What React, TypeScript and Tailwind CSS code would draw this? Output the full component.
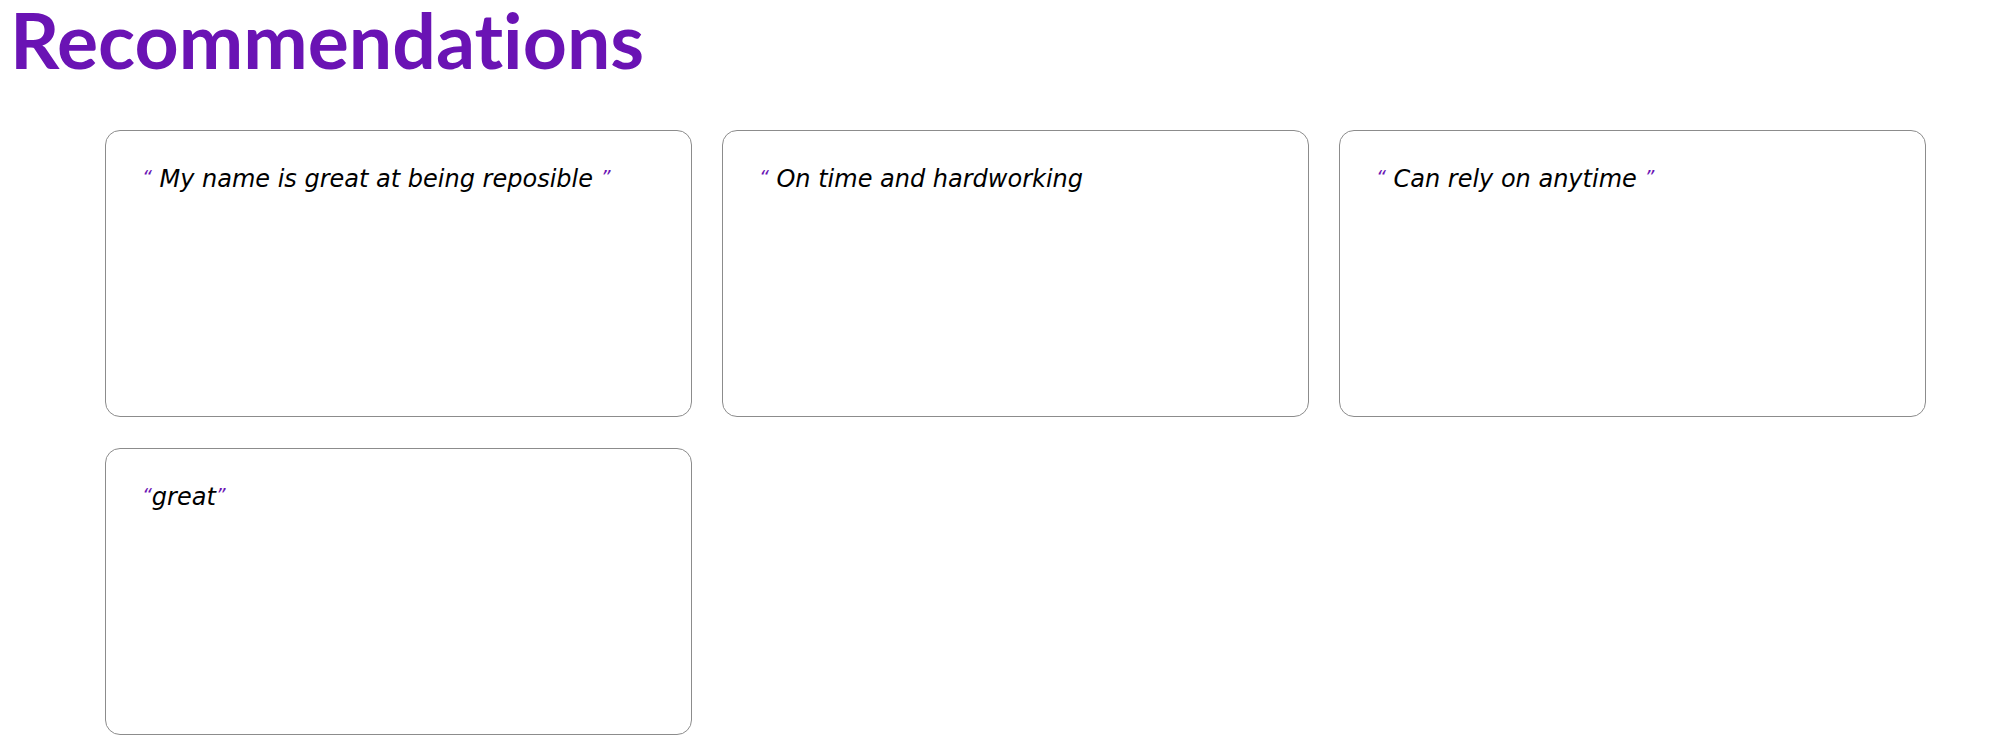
const recommendations = [
  { text: "My name is great at being reposible", spaced: true, closing: true },
  { text: "On time and hardworking", spaced: true, closing: false },
  { text: "Can rely on anytime", spaced: true, closing: true },
  { text: "great", spaced: false, closing: true },
];

function Quote({ children }: { children: string }) {
  return <span className="align-top text-[19px] leading-[26px] text-[#6a13b4]">{children}</span>;
}

function RecommendationCard({ text, spaced, closing }: { text: string; spaced: boolean; closing: boolean }) {
  return (
    <div className="h-[287px] rounded-[15px] border border-[#8c8c8c] px-[36px] pt-[33px]">
      <p className="font-['DejaVu_Sans',sans-serif] text-[24px] italic leading-[30px] text-black">
        <Quote>{"\u201C"}</Quote>
        {spaced ? ` ${text} ` : text}
        {closing && <Quote>{"\u201D"}</Quote>}
      </p>
    </div>
  );
}

export default function App() {
  return (
    <div className="min-h-screen bg-white font-['Lato','Open_Sans',sans-serif]">
      <h1 className="pl-[10px] text-[77px] font-bold leading-[78px] text-[#6a13b4] [font-variant-ligatures:none]">
        Recommendations
      </h1>
      <div className="mt-[52px] grid grid-cols-[repeat(3,587px)] gap-x-[30px] gap-y-[31px] pl-[105px]">
        {recommendations.map((r) => (
          <RecommendationCard key={r.text} {...r} />
        ))}
      </div>
    </div>
  );
}
